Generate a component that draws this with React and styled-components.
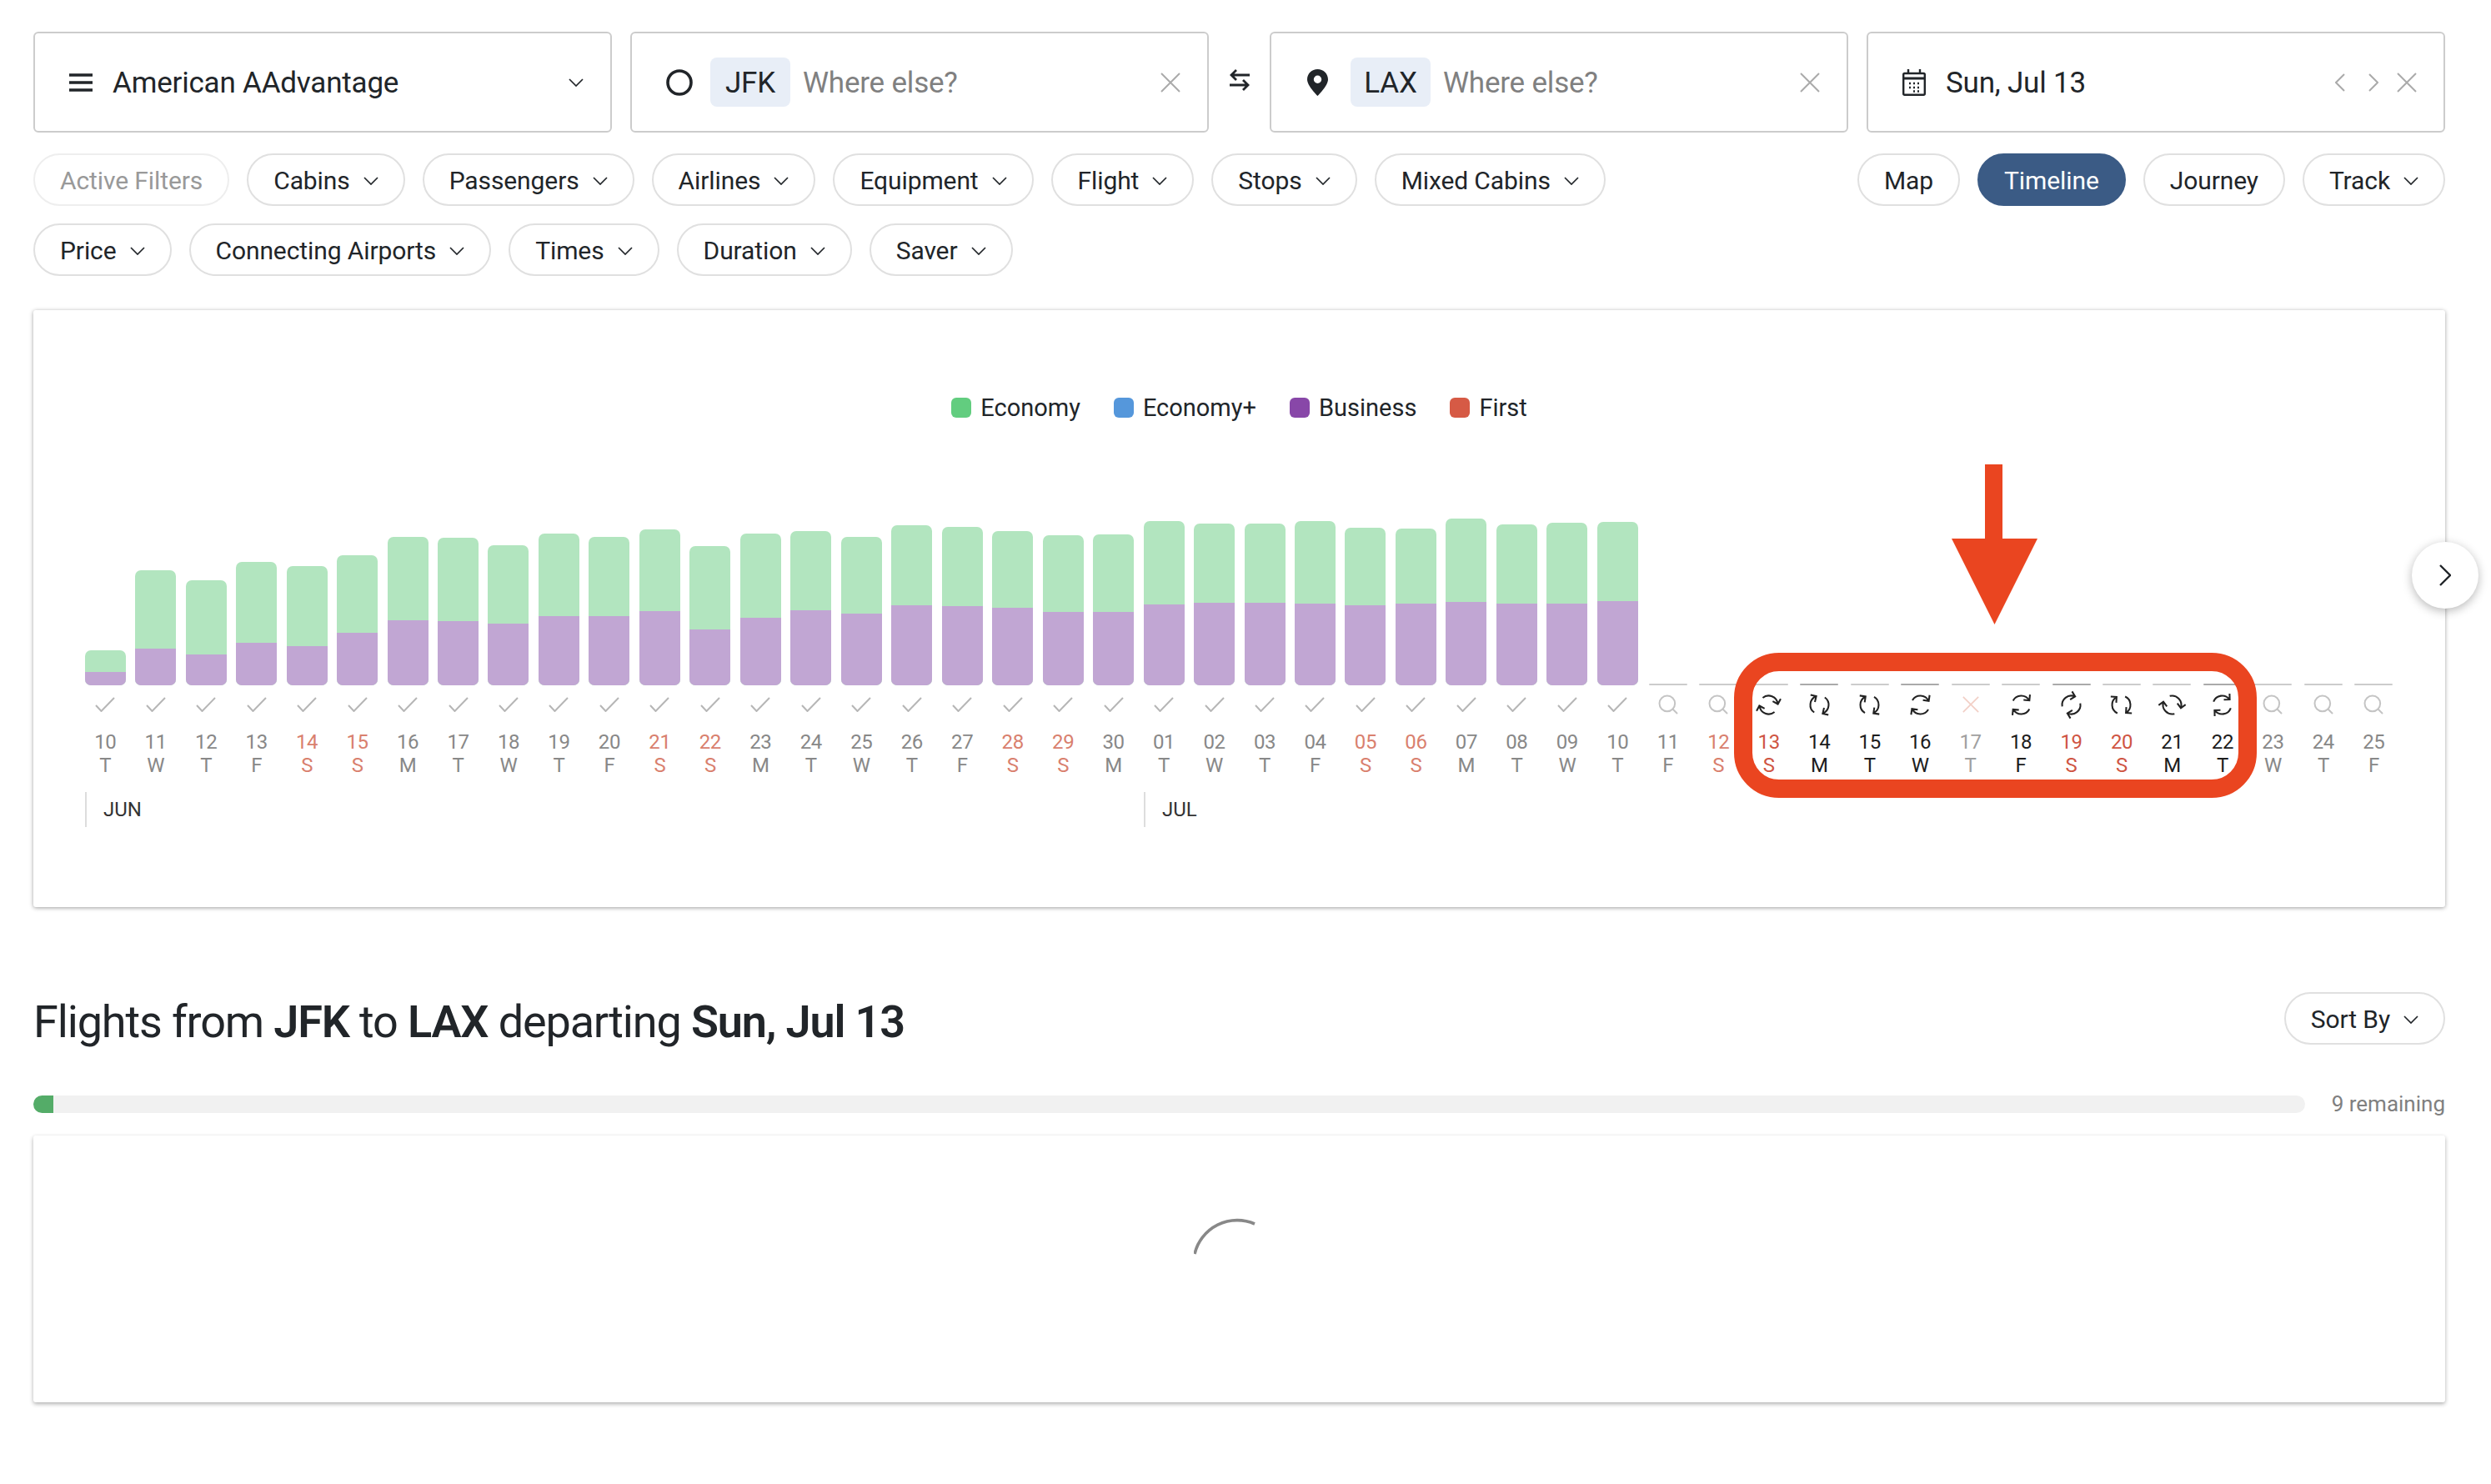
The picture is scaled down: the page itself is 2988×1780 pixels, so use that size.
import React from 'react'
import styled, { createGlobalStyle } from 'styled-components'
import { Search } from 'lucide-react'

const GlobalStyle = createGlobalStyle`
  body {
    margin: 0;
    background: #fff;
    color: #212529;
    font-family: Roboto, "Liberation Sans", sans-serif;
  }
`

const Page = styled.div`
  padding: 38px 55px 99px 40px;
`

const SearchRow = styled.div`
  display: flex;
  align-items: stretch;
`

const Field = styled.div`
  flex: 0 0 694px;
  height: 121px;
  box-sizing: border-box;
  display: flex;
  align-items: center;
  padding: 0 32px 0 41px;
  border: 2px solid #ccc;
  border-radius: 6px;
  font-size: 35px;
  letter-spacing: -0.2px;
  margin-left: ${(p) => p.$gap || 0}px;
`

const FieldText = styled.span`
  margin-left: ${(p) => p.$gap || 0}px;
  padding-top: 2px;
  color: ${(p) => p.$muted ? '#808080' : '#212529'};
`

const Code = styled.span`
  height: 59px;
  width: 96px;
  display: flex;
  align-items: center;
  justify-content: center;
  padding-top: 2px;
  box-sizing: border-box;
  margin-left: ${(p) => p.$gap}px;
  border-radius: 8px;
  background: #e8eef7;
`

const RightIcons = styled.div`
  margin-left: auto;
  display: flex;
  align-items: center;
  gap: ${(p) => p.$gap || 0}px;
  color: ${(p) => p.$color || '#aaa'};
`

const CloseSlot = styled.div`
  display: flex;
  margin-left: -6px;
`

const SwapSlot = styled.div`
  flex: 0 0 73px;
  display: flex;
  align-items: center;
  justify-content: center;
  color: #212529;
  padding-bottom: 6px;
`

const FilterBar = styled.div`
  display: flex;
  justify-content: space-between;
  align-items: flex-start;
  margin-top: 25px;
`

const PillGroup = styled.div`
  display: flex;
  flex-wrap: wrap;
  gap: 21px 21px;
  width: ${(p) => p.$width || 'auto'};
`

const Pill = styled.div`
  height: 63px;
  box-sizing: border-box;
  display: inline-flex;
  align-items: center;
  gap: 16px;
  padding: 2px 30px 0;
  border: 2px solid ${(p) => p.$faint ? '#eee' : '#e0e0e0'};
  border-radius: 32px;
  font-size: 30px;
  letter-spacing: -0.1px;
  white-space: nowrap;
  color: ${(p) => p.$faint ? '#999' : '#212529'};
  ${(p) => p.$active && `
    background: #3b5b85;
    border-color: #3b5b85;
    color: #fff;
  `}
`

const ChartCard = styled.section`
  position: relative;
  margin-top: 41px;
  height: 716px;
  box-sizing: border-box;
  padding-top: 104px;
  border-radius: 3px;
  background: #fff;
  box-shadow: 0 1px 5px rgba(0, 0, 0, 0.38);
`

const Legend = styled.div`
  display: flex;
  justify-content: center;
  gap: 40px;
  height: 24px;
  font-size: 29px;
  padding-top: 1px;
`

const LegendItem = styled.div`
  display: flex;
  align-items: center;
  gap: 11px;
`

const Swatch = styled.span`
  width: 24px;
  height: 24px;
  border-radius: 6px;
  background: ${(p) => p.$color};
`

const Columns = styled.div`
  display: grid;
  grid-template-columns: repeat(46, 60.48px);
  margin: 110px 0 0 56px;
`

const Column = styled.div`
  display: flex;
  flex-direction: column;
  align-items: center;
`

const BarSlot = styled.div`
  height: 211px;
  width: 49px;
  display: flex;
  flex-direction: column;
  justify-content: flex-end;
`

const Bar = styled.div`
  display: flex;
  flex-direction: column;
  border-radius: 7px;
  overflow: hidden;
  background: #b2e5bf;
`

const BarFill = styled.div`
  margin-top: auto;
  background: #c1a6d3;
`

const Dash = styled.div`
  height: 2px;
  border-radius: 2px;
  width: 46px;
  margin: 0 auto;
  background: ${(p) => p.$dark ? '#aaa' : '#ccc'};
`

const IconSlot = styled.div`
  height: 36px;
  margin-top: 5px;
  display: flex;
  align-items: center;
  justify-content: center;
  color: ${(p) => p.$color || '#222'};
`

const TONES = {
  plain: '#888',
  weekend: '#d9806e',
  active: '#1c1c1c',
  activeWeekend: '#cf5543',
  off: '#a0a0a0',
}

const DayLabel = styled.div`
  font-size: 24px;
  line-height: 28px;
  text-align: center;
  letter-spacing: -0.4px;
  margin-top: ${(p) => p.$top || 0}px;
  color: ${(p) => TONES[p.$tone]};
`

const Months = styled.div`
  display: flex;
  margin: 18px 0 0 62px;
`

const Month = styled.div`
  width: ${(p) => p.$width}px;
  box-sizing: border-box;
  height: 42px;
  padding-left: 20px;
  border-left: 2px solid #ddd;
  font-size: 24px;
  line-height: 42px;
  color: #333;
`

const NextButton = styled.div`
  position: absolute;
  right: -40px;
  top: 278px;
  width: 80px;
  height: 80px;
  display: flex;
  align-items: center;
  justify-content: center;
  border-radius: 50%;
  background: #fff;
  box-shadow: 0 3px 12px rgba(0, 0, 0, 0.28);
`

const Highlight = styled.div`
  position: absolute;
  left: 2040px;
  top: 411px;
  width: 627px;
  height: 174px;
  box-sizing: border-box;
  border: 22px solid #ea4520;
  border-radius: 54px;
`

const ArrowMark = styled.svg`
  position: absolute;
  left: 2301px;
  top: 185px;
`

const ResultsHead = styled.div`
  display: flex;
  justify-content: space-between;
  align-items: flex-start;
  height: 63px;
  margin-top: 102px;
`

const Heading = styled.h1`
  margin: 0;
  font-size: 54px;
  line-height: 71px;
  font-weight: 400;
  letter-spacing: -1.15px;
  b {
    font-weight: 600;
  }
`

const ProgressRow = styled.div`
  display: flex;
  align-items: center;
  margin-top: 56px;
`

const Track = styled.div`
  width: 2725px;
  height: 21px;
  border-radius: 11px;
  overflow: hidden;
  background: #f1f1f1;
`

const TrackFill = styled.div`
  height: 100%;
  background: #54ac68;
`

const Remaining = styled.div`
  margin-left: auto;
  font-size: 26px;
  color: #808080;
`

const ResultsCard = styled.section`
  margin-top: 23px;
  height: 320px;
  box-sizing: border-box;
  padding-top: 99px;
  display: flex;
  justify-content: center;
  align-items: flex-start;
  border-radius: 3px;
  box-shadow: 0 2px 5px rgba(0, 0, 0, 0.32);
`

const PinMark = styled.svg`
  margin-left: 2px;
`

const Chevron = ({ color = '#212529' }) => (
  <svg width="18" height="10" viewBox="0 0 18 10" fill="none" stroke={color} strokeWidth="1.7">
    <path d="M1 1l8 8 8-8" />
  </svg>
)

const Cross = ({ size = 24, width = 2 }) => (
  <svg width={size} height={size} viewBox="0 0 24 24" fill="none" stroke="currentColor" strokeWidth={width}>
    <path d="M1 1l22 22M23 1L1 23" />
  </svg>
)

const Angle = ({ flip }) => (
  <svg width="12" height="22" viewBox="0 0 12 22" fill="none" stroke="currentColor" strokeWidth="2">
    <path d={flip ? 'M1 1l10 10L1 21' : 'M11 1L1 11l10 10'} />
  </svg>
)

const Menu = () => (
  <svg width="28" height="22" viewBox="0 0 28 22" stroke="#212529" strokeWidth="3.4">
    <path d="M0 2h28M0 11h28M0 20h28" />
  </svg>
)

const Ring = () => (
  <svg width="32" height="32" viewBox="0 0 32 32" fill="none" stroke="#212529" strokeWidth="3.6">
    <circle cx="16" cy="16" r="14" />
  </svg>
)

const Swap = () => (
  <svg width="26" height="26" viewBox="0 0 26 26" fill="none" stroke="currentColor" strokeWidth="2.8">
    <path d="M25 7H3M9 1L3 7l6 6" />
    <path d="M1 19h22M17 13l6 6-6 6" />
  </svg>
)

const Pin = () => (
  <PinMark width="25" height="32" viewBox="0 0 25 32">
    <path fill="#212529" fillRule="evenodd" d="M12.5 0C5.6 0 0 5.4 0 12.2 0 20 12.5 32 12.5 32S25 20 25 12.2C25 5.4 19.4 0 12.5 0zm0 7.5a4.7 4.7 0 1 1 0 9.4 4.7 4.7 0 0 1 0-9.4z" />
  </PinMark>
)

const Calendar = () => (
  <svg width="28" height="32" viewBox="0 0 28 32" fill="none" stroke="#212529" strokeWidth="2.4">
    <rect x="1.2" y="5" width="25.6" height="25.8" rx="1.5" />
    <path d="M7 0v6M21 0v6" />
    <path d="M1 11h26" strokeWidth="3" />
    <path d="M8 17h2M13 17h2M18 17h2M8 22h2M13 22h2M18 22h2M13 26.5h2M18 26.5h2" strokeWidth="2.6" />
  </svg>
)

const Check = () => (
  <svg width="24" height="18" viewBox="0 0 24 18" fill="none" stroke="#b6b6b6" strokeWidth="2">
    <path d="M1 10l6.5 7L23 1" />
  </svg>
)

const Repeat = ({ turn }) => (
  <svg width="33" height="33" viewBox="0 0 24 24" fill="none" stroke="currentColor" strokeWidth="1.5" transform={`rotate(${turn})`}>
    <path d="M5.45 7.4A8 8 0 0 1 19.4 9M20.8 4.2l-1.2 5-5-1.2" />
    <path d="M18.55 16.6A8 8 0 0 1 4.6 15M3.2 19.8l1.2-5 5 1.2" />
  </svg>
)

const FILTERS = ['Cabins', 'Passengers', 'Airlines', 'Equipment', 'Flight', 'Stops', 'Mixed Cabins', 'Price', 'Connecting Airports', 'Times', 'Duration', 'Saver']

const LEGEND = [
  { name: 'Economy', color: '#62cd7f' },
  { name: 'Economy+', color: '#5597db' },
  { name: 'Business', color: '#8847a8' },
  { name: 'First', color: '#d65a45' },
]

// total and lower part of each bar, in px
const BAR_TOTAL = [42, 138, 126, 148, 143, 156, 178, 177, 168, 182, 178, 187, 167, 182, 185, 178, 192, 190, 185, 180, 181, 197, 194, 194, 197, 189, 188, 200, 193, 195, 196]
const BAR_LOWER = [16, 44, 37, 51, 47, 63, 78, 77, 74, 83, 83, 89, 67, 81, 90, 86, 96, 95, 93, 88, 88, 97, 99, 99, 98, 96, 98, 100, 98, 98, 101]

const TURNS = { 33: 15, 34: 90, 35: 85, 36: -5, 38: -8, 39: -45, 40: 80, 41: 40, 42: -15 }
const DARK_DASHES = [34, 36, 39, 42]
const WEEK = ['S', 'M', 'T', 'W', 'T', 'F', 'S']

const DAYS = Array.from({ length: 46 }, (_, i) => {
  const date = i <= 20 ? i + 10 : i - 20
  const letter = WEEK[(i + 2) % 7]
  const weekend = letter === 'S'
  const live = TURNS[i] !== undefined
  let tone = weekend ? 'weekend' : 'plain'
  if (live) tone = weekend ? 'activeWeekend' : 'active'
  if (i === 37) tone = 'off'
  return { i, date: String(date).padStart(2, '0'), letter, tone, live }
})

const dayIcon = ({ i, live }) => {
  if (i < 31) return <IconSlot><Check /></IconSlot>
  if (live) return <IconSlot><Repeat turn={TURNS[i]} /></IconSlot>
  if (i === 37) return <IconSlot $color="#f2cfc6"><Cross size={20} /></IconSlot>
  return <IconSlot $color="#c4c4c4"><Search size={28} strokeWidth={1.7} /></IconSlot>
}

export default function App() {
  return (
    <Page>
      <GlobalStyle />
      <SearchRow>
        <Field>
          <Menu />
          <FieldText $gap={24}>American AAdvantage</FieldText>
          <RightIcons $color="#212529"><Chevron /></RightIcons>
        </Field>
        <Field $gap={22}>
          <Ring />
          <Code $gap={21}>JFK</Code>
          <FieldText $gap={15} $muted>Where else?</FieldText>
          <RightIcons><Cross /></RightIcons>
        </Field>
        <SwapSlot><Swap /></SwapSlot>
        <Field>
          <Pin />
          <Code $gap={27}>LAX</Code>
          <FieldText $gap={15} $muted>Where else?</FieldText>
          <RightIcons><Cross /></RightIcons>
        </Field>
        <Field $gap={22}>
          <Calendar />
          <FieldText $gap={24}>Sun, Jul 13</FieldText>
          <RightIcons $gap={28}>
            <Angle />
            <Angle flip />
            <CloseSlot><Cross /></CloseSlot>
          </RightIcons>
        </Field>
      </SearchRow>

      <FilterBar>
        <PillGroup $width="1950px">
          <Pill $faint>Active Filters</Pill>
          {FILTERS.map((name) => (
            <Pill key={name}>{name}<Chevron /></Pill>
          ))}
        </PillGroup>
        <PillGroup>
          <Pill>Map</Pill>
          <Pill $active>Timeline</Pill>
          <Pill>Journey</Pill>
          <Pill>Track<Chevron /></Pill>
        </PillGroup>
      </FilterBar>

      <ChartCard>
        <Legend>
          {LEGEND.map((item) => (
            <LegendItem key={item.name}>
              <Swatch $color={item.color} />
              {item.name}
            </LegendItem>
          ))}
        </Legend>
        <Columns>
          {DAYS.map((day) => (
            <Column key={day.i}>
              <BarSlot>
                {day.i < 31
                  ? (
                    <Bar style={{ height: BAR_TOTAL[day.i] }}>
                      <BarFill style={{ height: BAR_LOWER[day.i] }} />
                    </Bar>
                  )
                  : <Dash $dark={DARK_DASHES.includes(day.i)} />}
              </BarSlot>
              {dayIcon(day)}
              <DayLabel $tone={day.tone} $top={13}>{day.date}</DayLabel>
              <DayLabel $tone={day.tone}>{day.letter}</DayLabel>
            </Column>
          ))}
        </Columns>
        <Months>
          <Month $width={1270}>JUN</Month>
          <Month $width={200}>JUL</Month>
        </Months>
        <Highlight />
        <ArrowMark width="103" height="192" viewBox="0 0 103 192">
          <path fill="#ea4520" d="M40 0h21v89h42L51.5 192 0 89h40z" />
        </ArrowMark>
        <NextButton>
          <svg width="14" height="26" viewBox="0 0 14 26" fill="none" stroke="#212529" strokeWidth="2.4">
            <path d="M1 1l12 12L1 25" />
          </svg>
        </NextButton>
      </ChartCard>

      <ResultsHead>
        <Heading>Flights from <b>JFK</b> to <b>LAX</b> departing <b>Sun, Jul 13</b></Heading>
        <Pill>Sort By<Chevron /></Pill>
      </ResultsHead>

      <ProgressRow>
        <Track><TrackFill style={{ width: `${(24 / 2725) * 100}%` }} /></Track>
        <Remaining>9 remaining</Remaining>
      </ProgressRow>

      <ResultsCard>
        <svg width="110" height="60" viewBox="0 0 110 60" fill="none" stroke="#888" strokeWidth="3.6">
          <path d="M1 43A52.5 52.5 0 0 1 73 7" />
        </svg>
      </ResultsCard>
    </Page>
  )
}
